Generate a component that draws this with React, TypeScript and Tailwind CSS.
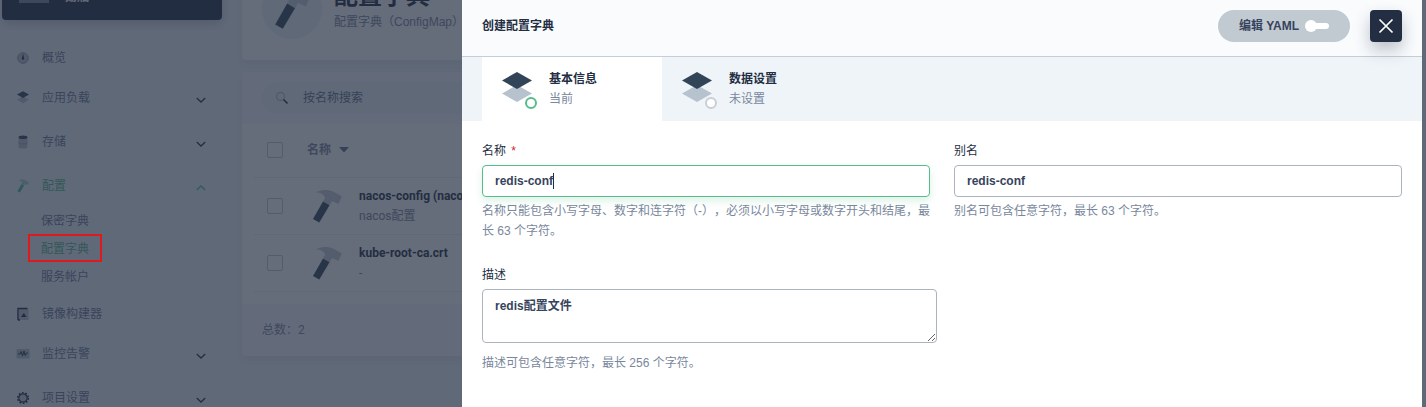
import React from "react";

function Hammer({ className, head = "#c3ccd6", grip = "#324558" }: { className: string; head?: string; grip?: string }) {
  return (
    <svg viewBox="0 0 40 40" className={`shrink-0 ${className}`} aria-hidden="true">
      <path d="M9 6.500C13 3.500 21 3 27 6l7.800 4.500L31.500 18l-6.500-3-2.500 4.500-6.500-4 2-3.500C17.500 8.500 14 6.500 9 6.500z" fill={head} />
      <path d="M16 15.500l6.500 3.800L12.300 36.500 6 33z" fill={grip} />
    </svg>
  );
}

function Layers({ className }: { className: string }) {
  return (
    <svg viewBox="0 0 40 40" className={`shrink-0 ${className}`} aria-hidden="true">
      <path d="M20 16l15 8.500L20 33 5 24.500z" fill="#b6c2cd" />
      <path d="M20 3l15 8.500L20 20 5 11.500z" fill="#324558" />
    </svg>
  );
}

function Gauge() {
  return (
    <svg viewBox="0 0 16 16" className="size-4 shrink-0" aria-hidden="true">
      <circle cx="8" cy="8" r="5.300" fill="#b6c2cd" stroke="#8d9bab" />
      <path d="M8 3.500l1.200 5a1.200 1.200 0 1 1-2.400 0z" fill="#242e42" />
    </svg>
  );
}

function Disks() {
  return (
    <svg viewBox="0 0 16 16" className="size-4 shrink-0" aria-hidden="true">
      <path d="M3.500 3.500v9.500c0 2 9 2 9 0V3.500z" fill="#b6c2cd" />
      <path d="M3.500 8.500c0 2 9 2 9 0" fill="none" stroke="#98a5b5" />
      <ellipse cx="8" cy="3.300" rx="4.500" ry="1.800" fill="#324558" />
    </svg>
  );
}

function Builder() {
  return (
    <svg viewBox="0 0 16 16" className="size-4 shrink-0" aria-hidden="true">
      <path d="M4 3h9.500v11H4z" fill="#b6c2cd" />
      <path d="M3 14V2.500h9.500M3 14h2" fill="none" stroke="#242e42" strokeWidth="1.400" />
      <path d="M8.800 7l2.700 4H6z" fill="#242e42" />
    </svg>
  );
}

function Monitor() {
  return (
    <svg viewBox="0 0 16 16" className="size-4 shrink-0" aria-hidden="true">
      <rect x="1.500" y="3" width="13" height="9.500" rx="1" fill="#b6c2cd" />
      <path d="M3 8h2l1.200-2.500L7.500 10l1.500-5 1.200 4.500L11.500 7H13" fill="none" stroke="#242e42" />
    </svg>
  );
}

function Gear() {
  return (
    <svg viewBox="0 0 16 16" className="size-4 shrink-0" aria-hidden="true">
      <circle cx="8" cy="8" r="5.300" fill="none" stroke="#242e42" strokeWidth="1.600" strokeDasharray="1.700 1.630" />
      <circle cx="8" cy="8" r="4.200" fill="#c3ccd6" stroke="#242e42" strokeWidth="1.200" />
    </svg>
  );
}

function Chevron({ up, color }: { up?: boolean; color: string }) {
  return (
    <svg viewBox="0 0 12 12" className="size-3 shrink-0" aria-hidden="true">
      <path d={up ? "M1.800 8L6 4l4.200 4" : "M1.800 4L6 8l4.200-4"} fill="none" stroke={color} strokeWidth="1.300" />
    </svg>
  );
}

function NavItem({ icon, label, chevron, active }: { icon: React.ReactNode; label: string; chevron?: "up" | "down"; active?: boolean }) {
  return (
    <a href="#" className={`flex h-9 items-center pr-[15px] pl-[13px] ${active ? "text-[#55bc8a]" : "text-[#6a7a94]"}`}>
      {icon}
      <span className="ml-[11px] flex-1">{label}</span>
      {chevron && (
        <span className="mt-1">
          <Chevron up={chevron === "up"} color={active ? "#55bc8a" : "#242e42"} />
        </span>
      )}
    </a>
  );
}

function Sidebar() {
  return (
    <aside className="w-[222px] shrink-0 pl-0.5">
      <div className="-mt-10 flex h-[60px] items-end rounded-[4px] bg-[#242e42] pb-[17px] pl-[17px] shadow-[0_4px_8px_rgba(36,46,66,0.2)]">
        <div className="h-8 w-[30px] bg-[#79879c]" />
        <span className="-mb-1 ml-4 leading-5 font-semibold text-white">勋瓶</span>
      </div>
      <nav className="mt-5 flex flex-col">
        <NavItem icon={<Gauge />} label="概览" />
        <div className="mt-1"><NavItem icon={<Layers className="size-4" />} label="应用负载" chevron="down" /></div>
        <div className="mt-2"><NavItem icon={<Disks />} label="存储" chevron="down" /></div>
        <div className="mt-2"><NavItem icon={<Hammer className="size-4" head="#a2d8bb" grip="#55bc8a" />} label="配置" chevron="up" active /></div>
        <div className="mt-[3px] mb-[5px] flex flex-col items-start pl-[26px] text-[#6a7a94]">
          <a href="#" className="flex h-7 items-center px-[13px]">保密字典</a>
          <a href="#" className="relative flex h-7 items-center px-[13px] text-[#55bc8a]">
            配置字典
            <span className="absolute inset-x-0 -top-px bottom-px z-20 border-2 border-[#e01a1c]" />
          </a>
          <a href="#" className="flex h-7 items-center px-[13px]">服务帐户</a>
        </div>
        <NavItem icon={<Builder />} label="镜像构建器" />
        <div className="mt-1"><NavItem icon={<Monitor />} label="监控告警" chevron="down" /></div>
        <div className="mt-2"><NavItem icon={<Gear />} label="项目设置" chevron="down" /></div>
      </nav>
    </aside>
  );
}

function Check({ label }: { label: string }) {
  return <input type="checkbox" aria-label={label} className="block size-4 appearance-none rounded-[2px] border border-[#c1c9d1]" />;
}

function Row({ name, note }: { name: string; note: string }) {
  return (
    <tr className="border-b border-[#eff2f5]">
      <td className="w-12 pl-[13px]"><Check label={name} /></td>
      <td className="h-[57px] py-0 pl-[5px]">
        <div className="flex items-center gap-3">
          <Hammer className="size-10" />
          <div className="whitespace-nowrap">
            <div className="leading-5 font-bold text-[#242e42]">{name}</div>
            <div className="leading-5 text-[#79879c]">{note}</div>
          </div>
        </div>
      </td>
    </tr>
  );
}

function ListPage() {
  return (
    <main className="ml-5 flex min-w-0 flex-1 flex-col pr-5">
      <header className="-mt-10 flex h-[100px] items-end rounded-[4px] bg-white pb-[21px] pl-5 shadow-[0_4px_8px_rgba(36,46,66,0.06)]">
        <div className="flex size-[60px] items-center justify-center rounded-full bg-[#eff4f9]">
          <Hammer className="size-12" />
        </div>
        <div className="mb-[7px] ml-3">
          <h1 className="text-2xl leading-8 font-bold text-[#242e42]">配置字典</h1>
          <p className="font-['Liberation_Sans','Noto_Sans_CJK_SC',sans-serif] leading-5 text-[#79879c]">配置字典（ConfigMap）</p>
        </div>
      </header>
      <section className="mt-3 overflow-hidden rounded-[4px] bg-white shadow-[0_4px_8px_rgba(36,46,66,0.06)]">
        <div className="bg-[#f9fbfd] px-5 py-[10px]">
          <label className="flex h-8 items-center rounded-full bg-[#eff4f9] pl-3">
            <svg viewBox="0 0 16 16" className="size-4 shrink-0" aria-hidden="true">
              <circle cx="6.500" cy="6.500" r="4" fill="none" stroke="#b6c2cd" strokeWidth="1.400" />
              <path d="M9.500 9.500l4 4" stroke="#242e42" strokeWidth="1.600" />
            </svg>
            <input aria-label="按名称搜索" placeholder="按名称搜索" className="ml-[13px] flex-1 bg-transparent outline-none placeholder:text-[#5f708a]" />
          </label>
        </div>
        <div className="px-3">
          <table className="w-full border-collapse">
            <thead>
              <tr className="border-b border-[#eff2f5]">
                <th className="h-[53px] w-12 pl-[13px]"><Check label="全选" /></th>
                <th className="pl-[5px] text-left font-semibold text-[#79879c]">
                  <span className="flex items-center gap-2">
                    名称
                    <svg viewBox="0 0 10 6" className="h-1.5 w-2.5" aria-hidden="true"><path d="M0 0h10L5 5.500z" fill="#5f708a" /></svg>
                  </span>
                </th>
              </tr>
            </thead>
            <tbody>
              <Row name="nacos-config (nacos配置)" note="nacos配置" />
              <Row name="kube-root-ca.crt" note="-" />
            </tbody>
          </table>
        </div>
        <div className="mt-3 bg-[#f9fbfd] px-5 py-4 leading-5 text-[#79879c]">总数：2</div>
      </section>
    </main>
  );
}

function Step({ title, state, current }: { title: string; state: string; current?: boolean }) {
  return (
    <li className={`flex h-16 w-[180px] items-center pl-[15px] ${current ? "bg-white" : ""}`}>
      <div className="relative">
        <Layers className="size-10" />
        <span className={`absolute right-0 bottom-0 size-3 rounded-full border-2 bg-white ${current ? "border-[#55bc8a]" : "border-[#c9ced6]"}`} />
      </div>
      <div className="ml-3">
        <div className="leading-5 font-bold text-[#242e42]">{title}</div>
        <div className="leading-5 text-[#79879c]">{state}</div>
      </div>
    </li>
  );
}

function Drawer() {
  return (
    <section role="dialog" aria-label="创建配置字典" className="fixed inset-y-0 right-1 z-30 w-[960px] bg-white font-['Liberation_Sans','Noto_Sans_CJK_SC',sans-serif] text-[#242e42]">
      <header className="flex h-[57px] items-center border-b border-[#c5cdd8] bg-[#f9fbfd] pr-5 pb-1 pl-5">
        <h2 className="flex-1 font-bold">创建配置字典</h2>
        <button className="flex h-8 w-[132px] items-center justify-center gap-1.5 rounded-full bg-[#c1c9d1] font-bold text-[#36435c]">
          编辑 YAML
          <svg viewBox="0 0 24 12" className="h-3 w-6" aria-hidden="true">
            <rect x="3" y="3" width="21" height="6" rx="3" fill="#fff" />
            <circle cx="6" cy="6" r="6" fill="#fff" />
          </svg>
        </button>
        <button aria-label="关闭" className="ml-5 flex size-8 items-center justify-center rounded-[4px] bg-[#242e42] shadow-[0_8px_16px_rgba(36,46,66,0.28)]">
          <svg viewBox="0 0 16 16" className="size-4" aria-hidden="true">
            <path d="M1.500 1.500l13 13M14.500 1.500l-13 13" stroke="#fff" strokeWidth="1.700" />
          </svg>
        </button>
      </header>
      <ol className="flex bg-[#eff4f9] px-5">
        <Step title="基本信息" state="当前" current />
        <Step title="数据设置" state="未设置" />
      </ol>
      <form className="px-5 pt-5">
        <div className="grid grid-cols-2 gap-6">
          <div>
            <label htmlFor="name" className="block leading-5">名称 <span className="ml-0.5 text-[#ca2621]">*</span></label>
            <div className="relative mt-1">
              <input id="name" defaultValue="redis-conf" className="h-8 w-full rounded-[4px] border border-[#55bc8a] px-3 font-bold text-[#36435c] shadow-[0_4px_8px_rgba(85,188,138,0.2)] outline-none" />
              <span className="absolute top-2 left-[71px] h-4 w-px bg-[#242e42]" />
            </div>
            <p className="mt-1 leading-5 text-[#79879c] [text-spacing-trim:space-all]">名称只能包含小写字母、数字和连字符（-），必须以小写字母或数字开头和结尾，最长 63 个字符。</p>
          </div>
          <div>
            <label htmlFor="alias" className="block leading-5">别名</label>
            <input id="alias" defaultValue="redis-conf" className="mt-1 h-8 w-full rounded-[4px] border border-[#abb4be] px-3 font-bold text-[#36435c] outline-none" />
            <p className="mt-1 leading-5 text-[#79879c]">别名可包含任意字符，最长 63 个字符。</p>
          </div>
        </div>
        <div className="mt-6 w-[455px]">
          <label htmlFor="desc" className="block leading-5">描述</label>
          <textarea id="desc" defaultValue="redis配置文件" className="mt-1 block h-[54px] w-full rounded-[4px] border border-[#abb4be] px-3 py-1.5 leading-5 font-bold text-[#36435c] outline-none" />
          <p className="mt-[10px] leading-5 text-[#79879c]">描述可包含任意字符，最长 256 个字符。</p>
        </div>
      </form>
    </section>
  );
}

export default function App() {
  return (
    <div className="flex h-screen overflow-hidden bg-[#eff4f9] font-[Roboto,'Noto_Sans_CJK_SC',sans-serif] text-xs">
      <Sidebar />
      <ListPage />
      <div className="fixed inset-0 z-10 bg-[#242e42]/70" />
      <Drawer />
    </div>
  );
}
